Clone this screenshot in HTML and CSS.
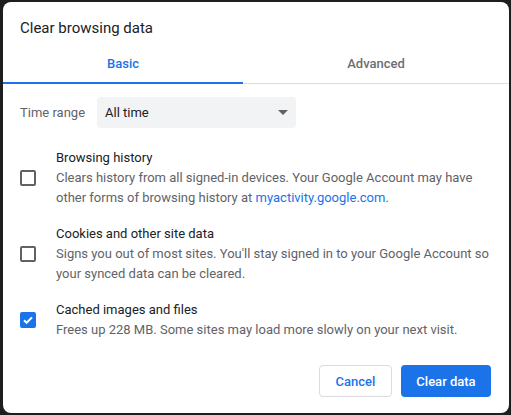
FILE: index.html
```html
<!DOCTYPE html>
<html>
<head>
<meta charset="utf-8">
<link rel="stylesheet" href="styles.css">
</head>
<body>
<div class="dialog">
  <div class="title">Clear browsing data</div>
  <div class="tabs">
    <div class="tab active">Basic</div>
    <div class="tab">Advanced</div>
  </div>
  <div class="range">
    <span class="range-label">Time range</span>
    <div class="select">
      <span>All time</span>
      <svg class="arrow" width="10" height="5" viewBox="0 0 10 5"><path d="M0 0h10L5 5z" fill="#5f6368"/></svg>
    </div>
  </div>
  <div class="item">
    <div class="cb"></div>
    <div class="text">
      <div class="label">Browsing history</div>
      <div class="desc">Clears history from all signed-in devices. Your Google Account may have other forms of browsing history at <span class="link">myactivity.google.com</span>.</div>
    </div>
  </div>
  <div class="item">
    <div class="cb"></div>
    <div class="text">
      <div class="label">Cookies and other site data</div>
      <div class="desc">Signs you out of most sites. You'll stay signed in to your Google Account so your synced data can be cleared.</div>
    </div>
  </div>
  <div class="item">
    <div class="cb checked">
      <svg width="12" height="12" viewBox="0 0 12 12"><path d="M2 6.2l2.6 2.6L10 3.4" fill="none" stroke="#fff" stroke-width="2"/></svg>
    </div>
    <div class="text">
      <div class="label">Cached images and files</div>
      <div class="desc">Frees up 228 MB. Some sites may load more slowly on your next visit.</div>
    </div>
  </div>
  <div class="actions">
    <button class="btn cancel">Cancel</button>
    <button class="btn primary">Clear data</button>
  </div>
</div>
</body>
</html>
```
FILE: styles.css
```css
html, body {
  margin: 0;
  padding: 0;
  background: #1e1e1e;
  width: 511px;
  height: 415px;
  overflow: hidden;
}
.dialog {
  margin: 2px 2px 0 3px;
  width: 506px;
  height: 411px;
  background: #fff;
  border-radius: 8px;
  font-family: Roboto, "Liberation Sans", sans-serif;
  color: #202124;
  box-sizing: border-box;
  position: relative;
}
.title {
  font-size: 15px;
  padding: 17px 0 0 17px;
  height: 25px;
  line-height: 18px;
}
.tabs {
  display: flex;
  height: 39px;
  border-bottom: 1px solid #dadce0;
}
.tab {
  flex: 1;
  display: flex;
  align-items: center;
  justify-content: center;
  font-size: 13px;
  font-weight: 500;
  color: #6b6f74;
  box-sizing: border-box;
}
.tab.active {
  color: #1a73e8;
  border-bottom: 2px solid #1a73e8;
  margin-bottom: -1px;
  flex: 0 0 240px;
}
.range {
  display: flex;
  align-items: center;
  padding: 13px 0 0 17px;
  font-size: 13px;
}
.range-label {
  color: #5f6368;
  width: 77px;
}
.select {
  width: 199px;
  height: 31px;
  background: #f1f3f4;
  border-radius: 4px;
  display: flex;
  align-items: center;
  justify-content: space-between;
  padding: 0 8px;
  box-sizing: border-box;
  color: #202124;
}
.item {
  display: flex;
  align-items: center;
  padding: 0 0 0 17px;
  margin-top: 20px;
}
.item + .item {
  margin-top: 16px;
}
.cb {
  width: 16px;
  height: 16px;
  border: 2px solid #5f6368;
  border-radius: 2px;
  box-sizing: border-box;
  flex: none;
  display: flex;
  align-items: center;
  justify-content: center;
}
.cb.checked {
  background: #1a73e8;
  border-color: #1a73e8;
}
.text {
  margin-left: 20px;
  font-size: 13px;
  line-height: 20px;
  width: 436px;
}
.label {
  color: #202124;
}
.desc {
  color: #5f6368;
}
.link {
  color: #1a73e8;
}
.actions {
  display: flex;
  justify-content: flex-end;
  gap: 9px;
  padding: 25px 18px 0 0;
}
.btn {
  height: 32px;
  border-radius: 4px;
  font-family: Roboto, "Liberation Sans", sans-serif;
  font-size: 13px;
  font-weight: 500;
  padding: 0;
  box-sizing: border-box;
}
.cancel {
  width: 73px;
  background: #fff;
  color: #1a73e8;
  border: 1px solid #dadce0;
}
.primary {
  width: 90px;
  background: #1a73e8;
  color: #fff;
  border: none;
}
```
